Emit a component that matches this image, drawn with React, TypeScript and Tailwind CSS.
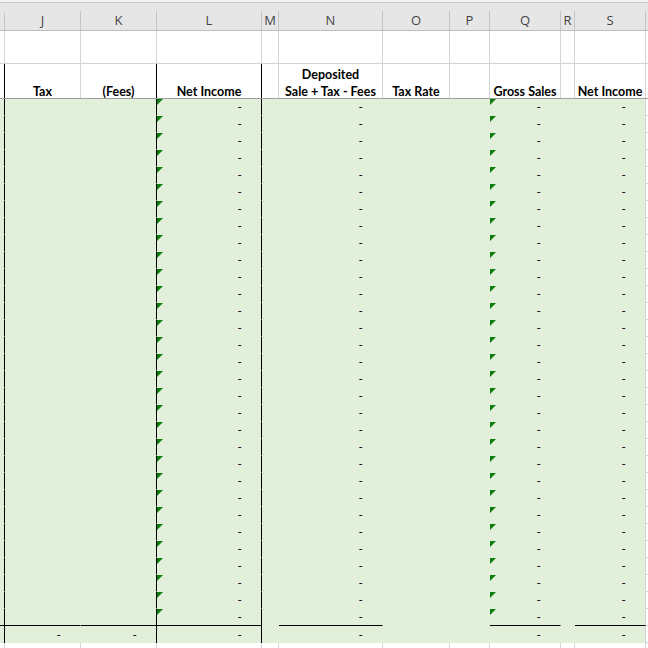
const font = { fontFamily: "Lato, 'Liberation Sans', sans-serif" };

type Col = {
  id: string;
  w: string;
  head?: string[];
  dataBorder: string;
  headBorder: string;
  dash?: boolean;
  totalDash?: boolean;
  flag?: boolean;
  totalLine?: boolean;
};

const cols: Col[] = [
  { id: "", w: "w-[5px]", dataBorder: "border-r-black", headBorder: "border-r-black", totalLine: true },
  { id: "J", w: "w-[76px]", head: ["Tax"], dataBorder: "border-r-[#e2efda]", headBorder: "border-r-[#d4d4d4]", totalDash: true, totalLine: true },
  { id: "K", w: "w-[76px]", head: ["(Fees)"], dataBorder: "border-r-black", headBorder: "border-r-black", totalDash: true, totalLine: true },
  { id: "L", w: "w-[105px]", head: ["Net Income"], dataBorder: "border-r-black", headBorder: "border-r-black", dash: true, totalDash: true, flag: true, totalLine: true },
  { id: "M", w: "w-[17px]", dataBorder: "border-r-[#e2efda]", headBorder: "border-r-[#d4d4d4]" },
  { id: "N", w: "w-[104px]", head: ["Deposited", "Sale + Tax - Fees"], dataBorder: "border-r-[#e2efda]", headBorder: "border-r-[#d4d4d4]", dash: true, totalDash: true, totalLine: true },
  { id: "O", w: "w-[67px]", head: ["Tax Rate"], dataBorder: "border-r-[#e2efda]", headBorder: "border-r-[#d4d4d4]" },
  { id: "P", w: "w-[40px]", dataBorder: "border-r-[#e2efda]", headBorder: "border-r-[#d4d4d4]" },
  { id: "Q", w: "w-[71px]", head: ["Gross Sales"], dataBorder: "border-r-[#e2efda]", headBorder: "border-r-[#d4d4d4]", dash: true, totalDash: true, flag: true, totalLine: true },
  { id: "R", w: "w-[14px]", dataBorder: "border-r-[#e2efda]", headBorder: "border-r-[#d4d4d4]" },
  { id: "S", w: "w-[71px]", head: ["Net Income"], dataBorder: "border-r-[#d4d4d4]", headBorder: "border-r-[#d4d4d4]", dash: true, totalDash: true, totalLine: true },
];

const dataRows = Array.from({ length: 31 }, (_, i) => i);

const Dash = () => (
  <span className="pr-[19px] text-[12px] leading-[16px] text-black">-</span>
);

const Flag = () => (
  <span className="absolute left-0 top-0 h-0 w-0 border-t-[6px] border-r-[6px] border-t-[#0a7d0a] border-r-transparent" />
);

export default function App() {
  return (
    <div className="h-[648px] w-[648px] overflow-hidden bg-white" style={font}>
      {/* top strip */}
      <div className="h-[3px] border-b border-b-[#c6c6c6] bg-[#f3f3f3]" />

      {/* column letters */}
      <div className="flex h-[28px] border-b border-b-[#bdbdbd] bg-[#e6e6e6]">
        {cols.map((c) => (
          <div key={c.id + "h"} className={`${c.w} flex shrink-0 flex-col`}>
            <div className="h-[10px]" />
            <div
              className="flex flex-1 items-center justify-center border-r border-r-[#c4c4c4] text-[13px] text-[#444]"
              style={{ fontFamily: "'Open Sans', 'Liberation Sans', sans-serif" }}
            >
              {c.id}
            </div>
          </div>
        ))}
        <div className="flex flex-1 flex-col">
          <div className="h-[10px]" />
          <div className="flex-1" />
        </div>
      </div>

      {/* row 1 */}
      <div className="flex h-[33px] border-b border-b-[#d4d4d4]">
        {cols.map((c) => (
          <div key={c.id + "r1"} className={`${c.w} shrink-0 border-r border-r-[#d4d4d4]`} />
        ))}
        <div className="flex-1" />
      </div>

      {/* row 2 headings */}
      <div className="flex h-[35px] border-b border-b-[#9e9e9e]">
        {cols.map((c) => (
          <div
            key={c.id + "r2"}
            className={`${c.w} flex shrink-0 flex-col items-center justify-end border-r ${c.headBorder}`}
          >
            <div className="relative top-[2px] flex flex-col items-center">
              {c.head?.map((t) => (
                <span key={t} className="whitespace-nowrap text-[12.5px] font-bold leading-[17px] text-black">
                  {t}
                </span>
              ))}
            </div>
          </div>
        ))}
        <div className="flex-1" />
      </div>

      {/* data rows */}
      {dataRows.map((r) => (
        <div key={r} className="flex h-[17px]">
          {cols.map((c) => (
            <div
              key={c.id + r}
              className={`${c.w} relative flex shrink-0 items-end justify-end border-r border-b bg-[#e2efda] ${c.dataBorder} ${
                r === 30 && c.totalLine ? "border-b-black" : "border-b-[#e2efda]"
              }`}
            >
              {c.flag && <Flag />}
              {c.dash && <Dash />}
            </div>
          ))}
          <div className="flex-1 border-b border-b-[#d4d4d4]" />
        </div>
      ))}

      {/* total row */}
      <div className="flex h-[17px]">
        {cols.map((c) => (
          <div
            key={c.id + "t"}
            className={`${c.w} flex shrink-0 items-end justify-end border-r bg-[#e2efda] ${c.dataBorder}`}
          >
            {c.totalDash && <Dash />}
          </div>
        ))}
        <div className="flex-1 border-b border-b-[#d4d4d4]" />
      </div>

      {/* empty row below */}
      <div className="flex h-[20px]">
        {cols.map((c) => (
          <div key={c.id + "e"} className={`${c.w} shrink-0 border-r border-r-[#d4d4d4]`} />
        ))}
        <div className="flex-1" />
      </div>
    </div>
  );
}
